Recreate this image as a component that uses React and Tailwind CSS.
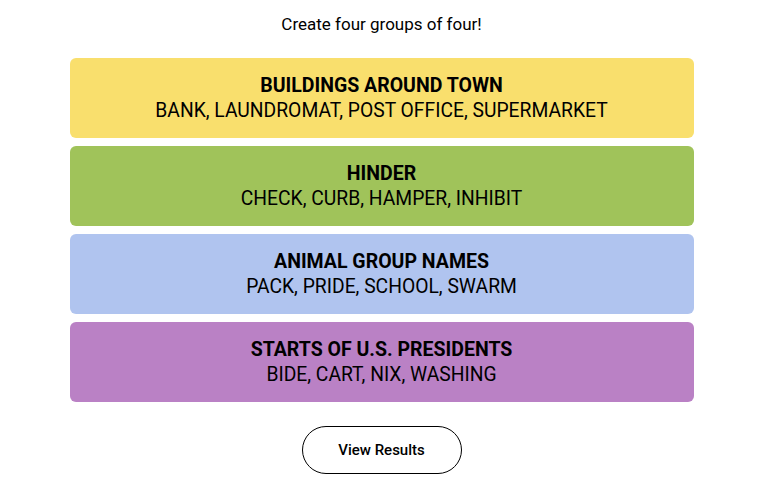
import React from "react";

const groups = [
  { title: "BUILDINGS AROUND TOWN", words: "BANK, LAUNDROMAT, POST OFFICE, SUPERMARKET", color: "bg-[#f9df6d]" },
  { title: "HINDER", words: "CHECK, CURB, HAMPER, INHIBIT", color: "bg-[#a0c35a]" },
  { title: "ANIMAL GROUP NAMES", words: "PACK, PRIDE, SCHOOL, SWARM", color: "bg-[#b0c4ef]" },
  { title: "STARTS OF U.S. PRESIDENTS", words: "BIDE, CART, NIX, WASHING", color: "bg-[#ba81c5]" },
];

const App = () => {
  return (
    <div className="w-[763px] min-h-[479px] bg-white text-black font-['Roboto',sans-serif] flex flex-col items-center">
      <p className="mt-[13px] text-[17px] leading-[22px]">Create four groups of four!</p>
      <div className="mt-[23px] w-[624px] flex flex-col gap-2">
        {groups.map((g) => (
          <div
            key={g.title}
            className={`${g.color} h-[80px] rounded-md flex flex-col items-center justify-center`}
          >
            <div className="text-[19.5px] leading-[25px] font-bold">{g.title}</div>
            <div className="text-[19.3px] leading-[25px]">{g.words}</div>
          </div>
        ))}
      </div>
      <button className="mt-[24px] w-[160px] h-[48px] rounded-full border border-black bg-white text-[15px] font-medium">
        View Results
      </button>
    </div>
  );
};

export default App;
